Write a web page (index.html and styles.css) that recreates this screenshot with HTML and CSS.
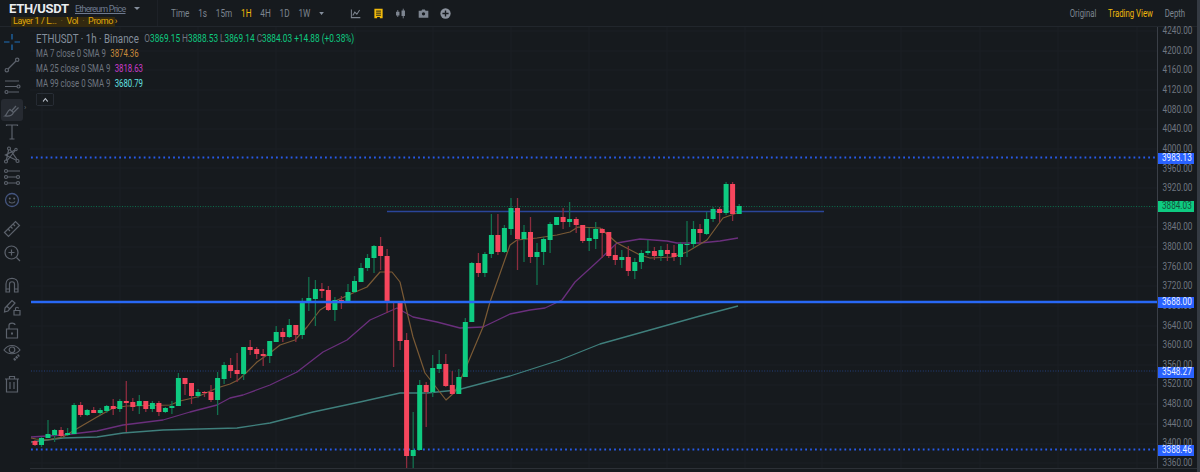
FILE: index.html
```html
<!DOCTYPE html>
<html lang="en">
<head>
<meta charset="utf-8">
<title>ETH/USDT</title>
<link rel="stylesheet" href="styles.css">
</head>
<body>
<header class="topbar">
  <div class="brand">
    <div class="brand-row">
      <span class="pair">ETH/USDT</span>
      <a class="pair-link">Ethereum Price</a>
      <span class="caret brand-caret"></span>
    </div>
    <div class="badges"><span>Layer 1 / L...</span><i>·</i><span>Vol</span><i>·</i><span>Promo ›</span></div>
  </div>
  <nav class="intervals">
    <span>Time</span><span>1s</span><span>15m</span><span class="gold">1H</span><span>4H</span><span>1D</span><span>1W</span><span class="caret"></span>
  </nav>
  <div class="top-icons">
    <svg viewBox="0 0 16 16" class="ticon"><path d="M2 2V14H15M4 11L7 6L10 9L14 3" fill="none" stroke="#7d8590" stroke-width="1.5"/></svg>
    <svg viewBox="0 0 16 16" class="ticon"><path d="M2 1H14V15H10V13H6V15H2Z" fill="#f0b90b"/><path d="M4.500 4.500H11.500M4.500 7.500H11.500M4.500 10.500H11.500" stroke="#161a1e" stroke-width="1.400"/></svg>
    <svg viewBox="0 0 16 16" class="ticon"><path d="M4 3V13M12 1V15" stroke="#7d8590" stroke-width="1.300"/><path d="M4 5.500V11M12 3.500V11.500" stroke="#7d8590" stroke-width="5"/></svg>
    <svg viewBox="0 0 16 16" class="ticon"><path d="M1 4H5L6 2H10L11 4H15V14H1Z" fill="#7d8590"/><circle cx="8" cy="8.500" r="2.400" fill="#161a1e"/></svg>
    <svg viewBox="0 0 16 16" class="ticon"><circle cx="8" cy="8" r="7.500" fill="#8a919c"/><path d="M8 3.500V12.500M3.500 8H12.500" stroke="#161a1e" stroke-width="2"/></svg>
  </div>
  <div class="views"><span>Original</span><span class="gold">Trading View</span><span>Depth</span></div>
</header>

<main class="main">
  <aside class="tools">
    <div class="tool"><svg viewBox="0 0 20 20"><path d="M10 2V7.500M10 12.500V18M2 10H7.500M12.500 10H18" stroke="#1e6fb8" stroke-width="1.200" fill="none"/></svg></div>
    <div class="tool"><svg viewBox="0 0 20 20"><path d="M6 14L14 6" class="s"/><circle cx="4.800" cy="15.200" r="1.700" class="s"/><circle cx="15.200" cy="4.800" r="1.700" class="s"/></svg></div>
    <div class="tool"><svg viewBox="0 0 20 20"><path d="M3 4H17M3 9.500H15M6.500 15H17" class="s"/><circle cx="16.500" cy="9.500" r="1.500" class="s"/><circle cx="4.500" cy="15" r="1.500" class="s"/></svg></div>
    <div class="tool active"><svg viewBox="0 0 20 20"><path d="M3 16C5 15 5 11 8 9.500L11.500 12.500C10.500 15 7 16.500 3 16ZM10 10.500L14 6M12 12L16.500 7.500" class="s"/></svg><b class="flyout">›</b></div>
    <div class="tool"><svg viewBox="0 0 20 20"><path d="M4.500 4V3H15.500V4M10 3V17M7.500 17H12.500" class="s"/></svg></div>
    <div class="tool"><svg viewBox="0 0 20 20"><path d="M4 17L7 3L16 16L3.500 10L14 4.500Z" class="s"/><circle cx="4" cy="16.500" r="1.500" class="d"/><circle cx="7" cy="3.500" r="1.500" class="d"/><circle cx="15.500" cy="16" r="1.500" class="d"/><circle cx="14" cy="4.500" r="1.200" class="d"/></svg></div>
    <div class="tool"><svg viewBox="0 0 20 20"><path d="M5.500 4H18M5.500 10H14M5.500 16H14" class="s"/><circle cx="4" cy="4" r="1.500" class="s"/><circle cx="4" cy="10" r="1.500" class="s"/><circle cx="4" cy="16" r="1.500" class="s"/><circle cx="16" cy="10" r="1.500" class="s"/><circle cx="16" cy="16" r="1.500" class="s"/></svg></div>
    <div class="tool"><svg viewBox="0 0 20 20"><circle cx="10" cy="10" r="6.500" fill="none" stroke="#44557f" stroke-width="1.300"/><path d="M7 11.500C8 13.500 12 13.500 13 11.500" class="s"/><circle cx="7.800" cy="8.500" r="1" fill="#5c626c"/><circle cx="12.200" cy="8.500" r="1" fill="#5c626c"/></svg></div>
    <div class="tool gap-l"><svg viewBox="0 0 20 20"><path d="M2.500 13.500L13.500 2.500L17.500 6.500L6.500 17.500ZM6 10L8 12M8.500 7.500L10.500 9.500M11 5L13 7" class="s"/></svg></div>
    <div class="tool gap-s"><svg viewBox="0 0 20 20"><circle cx="9.500" cy="9.500" r="6.500" class="s"/><path d="M14.500 14.500L18 18M9.500 6.500V12.500M6.500 9.500H12.500" class="s"/></svg></div>
    <div class="tool gap-m"><svg viewBox="0 0 20 20"><path d="M4 17V9C4 1.500 16 1.500 16 9V17H12.500V9C12.500 6 7.500 6 7.500 9V17ZM4 14H7.500M12.500 14H16" class="s"/></svg></div>
    <div class="tool"><svg viewBox="0 0 20 20"><path d="M3 11L10 3.500L13 6L6 14L2.500 15ZM4.500 9L8 12" class="s"/><path d="M12 13.500H18V18H12ZM13.500 13.500V11.500C13.500 9.800 16.500 9.800 16.500 11.500" class="s"/></svg></div>
    <div class="tool"><svg viewBox="0 0 20 20"><path d="M4.500 9H15.500V18H4.500ZM7 9V5.500C7 2.500 13 2.500 13 5" class="s"/><rect x="9" y="12.500" width="2" height="2" fill="#5c626c"/></svg></div>
    <div class="tool"><svg viewBox="0 0 20 20"><path d="M2 8C6 2 14 2 18 8C14 13 6 13 2 8Z" class="s"/><circle cx="10" cy="7.800" r="2.800" class="s"/><path d="M12 18L17 13" stroke="#5c626c" stroke-width="2.500" stroke-dasharray="2 .8"/></svg></div>
    <div class="tool gap-m"><svg viewBox="0 0 20 20"><path d="M3 5H17M7.500 5V2.500H12.500V5M4.500 5V18H15.500V5M8 8V15M12 8V15" class="s"/></svg></div>
  </aside>

  <section class="chart">
    <svg class="plot" viewBox="30 27 1127 445" width="1127" height="445">
      <path class="grid" d="M42 27V468M120 27V468M198 27V468M276 27V468M355 27V468M433 27V468M511 27V468M589 27V468M667 27V468M745 27V468M822 27V468M901 27V468M980 27V468M1058 27V468M1137 27V468M30 31H1157M30 51H1157M30 70H1157M30 90H1157M30 110H1157M30 129H1157M30 149H1157M30 168H1157M30 188H1157M30 208H1157M30 227H1157M30 247H1157M30 267H1157M30 286H1157M30 306H1157M30 326H1157M30 345H1157M30 365H1157M30 385H1157M30 404H1157M30 424H1157M30 444H1157M30 463H1157"/>

      <path class="hl-dot" d="M31 157.500H1157M31 449.500H1157"/>
      <path class="hl-thin" d="M31 371H1157"/>
      <path class="hl-last" d="M31 206.500H1157"/>
      <path class="hl-trend" d="M387 211.500H824"/>

      <path class="ma99" d="M31 442L63 438L97 437L123 433L163 430L237 428L270 423L313 412L360 402L400 393L427 393L457 390L510 376L560 360L600 344L650 330L700 316L738 306"/>
      <path class="ma25" d="M31 437L63 435L97 431L123 425L163 420L190 412L217 405L230 398L243 395L270 385L297 372L323 352L347 340L370 320L397 308L413 317L437 322L460 328L483 327L510 314L530 310L545 308L562 300L575 282L597 262L617 243L640 239L667 241L677 243L700 243L720 241L738 238"/>
      <path class="ma7" d="M31 438L36 439L47 440L63 437L73 431L97 417L113 408L127 406L170 405L180 401L197 397L217 388L230 384L238 380L247 372L257 362L270 353L280 345L295 340L307 327L320 310L333 302L353 293L367 287L380 272L392 272L400 282L407 312L413 337L425 373L446 400L455 392L467 365L483 327L490 302L510 245L517 240L537 238L557 235L570 232L578 227L600 228L617 243L640 255L650 258L673 257L687 252L707 240L723 218L737 213"/>

      <path class="wick-up" d="M41.500 437V447M48 420V438M54.600 429V442M67.600 428V436M74.100 403V434M87.200 409V416M100.200 408V415M106.700 405V413M119.800 399V412M139.300 395V414M152.400 401V412M165.400 407V413M171.900 401V414M178.400 373V406M198 389V398M217.600 372V415M224.100 362V384M243.600 347V380M269.700 341V363M276.200 326V342M289.300 319V338M302.300 298V339M308.800 277V311M315.400 280V326M334.900 297V321M348 284V303M354.500 276V293M361 263V282M367.500 254V271M374 245V273M413.200 412V468M419.700 380V450M432.700 355V397M439.200 350V373M458.800 369V394M465.300 318V377M471.800 262V322M484.900 252V277M491.400 214V258M504.400 225V253M511 198V235M524 225V262M537 243V285M543.600 237V265M550.100 222V253M556.600 217V225M569.600 202V227M589.200 228V251M595.700 222V249M621.800 250V268M634.800 258V279M641.400 250V269M647.900 240V255M660.900 246V261M680.500 242V265M687 221V257M693.500 221V248M706.600 212V235M713.100 207V222M726.100 182V215M739.200 204V214"/>
      <path class="wick-down" d="M35 440V446M61.100 427V437M80.600 402V417M93.700 407V413M113.200 399V415M126.300 381V432M132.800 398V411M145.800 401V412M158.900 401V416M185 378V395M191.500 383V404M204.500 391V397M211 385V402M230.600 358V378M237.100 353V382M250.200 340V355M256.700 347V359M263.200 349V366M282.800 328V342M295.800 325V342M321.900 283V298M328.400 286V311M341.400 296V309M380.600 237V270M387.100 249V313M393.600 302V367M400.100 303V350M406.600 333V468M426.200 382V427M445.800 354V387M452.300 371V395M478.400 253V277M497.900 214V255M517.500 198V270M530.500 217V263M563.100 208V229M576.200 217V233M582.700 225V243M602.200 228V258M608.800 232V258M615.300 245V265M628.300 246V276M654.400 247V260M667.400 244V261M674 245V261M700 224V242M719.600 207V222M732.600 182V221"/>

      <path class="body-up" d="M41.500 438V445M48 434V438M54.600 430V435M67.600 433V435M74.100 405V434M87.200 410V415M100.200 410V413M106.700 406V411M119.800 401V409M139.300 401V406M152.400 403V409M165.400 408V412M171.900 406V408M178.400 378V406M198 392V396M217.600 378V400M224.100 365V379M243.600 347V374M269.700 341V356M276.200 332V342M289.300 325V337M302.300 302V335M308.800 298V302M315.400 289V299M334.900 300V310M348 292V303M354.500 281V292M361 268V282M367.500 258V268M374 246V258M413.200 450V456M419.700 385V450M432.700 368V392M439.200 364V369M458.800 377V394M465.300 322V377M471.800 263V322M484.900 254V273M491.400 235V254M504.400 228V252M511 208V229M524 232V239M537 252V257M543.600 239V252M550.100 224V240M556.600 217V225M569.600 219V222M589.200 238V241M595.700 229V239M621.800 257V260M634.800 262V271M641.400 253V262M647.900 251V253M660.900 250V256M680.500 244V257M687 244V245M693.500 229V244M706.600 219V234M713.100 209V219M726.100 184V213M739.200 206V214"/>
      <path class="body-down" d="M35 441V445M61.100 430V436M80.600 405V415M93.700 410V413M113.200 406V409M126.300 401V403M132.800 402V407M145.800 401V409M158.900 403V412M185 378V384M191.500 383V396M204.500 392V393M211 392V400M230.600 365V371M237.100 370V374M250.200 347V350M256.700 349V354M263.200 354V356M282.800 332V337M295.800 325V335M321.900 289V291M328.400 290V310M341.400 300V303M380.600 246V256M387.100 256V303M393.600 302V303M400.100 303V341M406.600 340V456M426.200 385V392M445.800 364V386M452.300 385V394M478.400 263V273M497.900 235V252M517.500 208V239M530.500 232V257M563.100 217V222M576.200 219V225M582.700 225V241M602.200 229V233M608.800 232V256M615.300 255V260M628.300 257V271M654.400 251V256M667.400 250V254M674 253V257M700 229V233M719.600 209V213M732.600 184V214"/>

      <path class="hl-solid" d="M31 302H1157"/>
      <path class="floor" d="M30 468.500H1157"/>
    </svg>

    <div class="legend">
      <div class="legend-title">
        <span class="symbol">ETHUSDT · 1h · Binance</span>
        <span class="ohlc">O<b>3869.15</b> H<b>3888.53</b> L<b>3869.14</b> C<b>3884.03</b> <b>+14.88 (+0.38%)</b></span>
      </div>
      <div class="legend-row">MA 7 close 0 SMA 9 <span class="v7">3874.36</span></div>
      <div class="legend-row">MA 25 close 0 SMA 9 <span class="v25">3818.63</span></div>
      <div class="legend-row">MA 99 close 0 SMA 9 <span class="v99">3680.79</span></div>
      <button class="collapse"><svg viewBox="0 0 10 6"><path d="M2 4.500L5 1.500L8 4.500" fill="none" stroke="#b7bdc6" stroke-width="1.200"/></svg></button>
    </div>
  </section>

  <aside class="axis">
    <div class="ticks">
      <span>4240.00</span><span>4200.00</span><span>4160.00</span><span>4120.00</span><span>4080.00</span><span>4040.00</span><span>4000.00</span><span>3960.00</span><span>3920.00</span><span>3880.00</span><span>3840.00</span><span>3800.00</span><span>3760.00</span><span>3720.00</span><span>3680.00</span><span>3640.00</span><span>3600.00</span><span>3560.00</span><span>3520.00</span><span>3480.00</span><span>3440.00</span><span>3400.00</span><span>3360.00</span>
    </div>
    <div class="tag tag-a"><span>3983.13</span></div>
    <div class="tag tag-last"><span>3884.03</span></div>
    <div class="tag tag-b"><span>3688.00</span></div>
    <div class="tag tag-c"><span>3548.27</span></div>
    <div class="tag tag-d"><span>3388.46</span></div>
  </aside>
  <div class="strip"></div>
</main>
</body>
</html>
```
FILE: styles.css
```css
* { box-sizing: border-box; }
html, body { margin: 0; height: 100%; }
body {
  width: 1200px;
  height: 472px;
  overflow: hidden;
  background: #161a1e;
  color: #848e9c;
  font-family: Roboto, "Liberation Sans", sans-serif;
  font-size: 10px;
}
.s { fill: none; stroke: #5c626c; stroke-width: 1.2; }
.d { fill: #161a1e; stroke: #5c626c; stroke-width: 1.1; }
.gold { color: #f0b90b; }

/* top bar */
.topbar {
  height: 27px;
  display: flex;
  align-items: center;
  border-bottom: 1px solid #21262c;
}
.brand {
  width: 158px;
  height: 26px;
  padding: 1px 0 0 9px;
  border-right: 1px solid #1d2127;
  flex: none;
}
.brand-row { display: flex; align-items: center; height: 15px; }
.pair { font-size: 13px; font-weight: 700; color: #eaecef; width: 66px; letter-spacing: -.3px; }
.pair-link {
  font-size: 9px;
  color: #6f7a8f;
  text-decoration: underline;
  letter-spacing: -.75px;
  width: 56px;
}
.caret {
  width: 0; height: 0;
  border-left: 3px solid transparent;
  border-right: 3px solid transparent;
  border-top: 3px solid #848e9c;
  display: inline-block;
}
.brand-caret { margin-left: 3px; }
.badges {
  margin: 1px 0 0 2px;
  width: 104px;
  height: 9.500px;
  background: #33290f;
  color: #e0a90a;
  font-size: 9px;
  letter-spacing: -.4px;
  line-height: 9.500px;
  display: flex;
  padding-left: 2px;
  white-space: nowrap;
}
.badges i { font-style: normal; margin: 0 4px; color: #7d6a20; }
.intervals {
  margin-left: 13px;
  width: 158px;
  flex: none;
  display: flex;
  align-items: center;
  gap: 11.300px;
  font-size: 10.500px;
  transform: scaleX(.78);
  transform-origin: left center;
  color: #7d8590;
  white-space: nowrap;
}
.top-icons {
  margin-left: 21px;
  display: flex;
  gap: 11.600px;
  flex: none;
}
.ticon { width: 11px; height: 11px; display: block; }
.views {
  margin-left: auto;
  padding-right: 19px;
  display: flex;
  gap: 15px;
  font-size: 10px;
  color: #7d8590;
  transform: scaleX(.78);
  transform-origin: right center;
  white-space: nowrap;
}

/* main */
.main { display: flex; height: 445px; position: relative; }
.tools {
  width: 30px;
  flex: none;
  padding: 4px 0 0 0;
}
.tool {
  width: 24px;
  height: 22.500px;
  display: flex;
  align-items: center;
  justify-content: center;
  position: relative;
}
.tool svg { width: 20px; height: 20px; }
.tool.active { background: #262a31; border-radius: 3px; margin-left: 1px; width: 22px; }
.flyout {
  position: absolute;
  left: 23px;
  top: 4px;
  font-size: 8px;
  font-weight: 400;
  color: #5c626c;
}
.gap-l { margin-top: 7px; }
.gap-s { margin-top: 1px; }
.gap-m { margin-top: 9.500px; }

/* chart */
.chart { width: 1127px; flex: none; position: relative; overflow: hidden; }
.plot { display: block; }
.plot path { fill: none; stroke-linejoin: round; }
.grid { stroke: #1b1f25; stroke-width: 1; }
.hl-dot { stroke: #2962ff; stroke-width: 1.800; stroke-dasharray: 1.800 3.100; opacity: .9; }
.hl-thin { stroke: #24407f; stroke-width: 1; stroke-dasharray: 1 1.600; }
.hl-last { stroke: #0c6e4c; stroke-width: 1; stroke-dasharray: 1 1.600; }
.hl-trend { stroke: #2a4599; stroke-width: 1.300; }
.hl-solid { stroke: #2868f5; stroke-width: 2.400; }
.floor { stroke: #2c3036; stroke-width: 1; }
.ma7 { stroke: #7a5a35; stroke-width: 1.200; }
.ma25 { stroke: #6a2f7c; stroke-width: 1.300; }
.ma99 { stroke: #3f7f7c; stroke-width: 1.300; }
.wick-up { stroke: #12704e; stroke-width: 1.300; }
.wick-down { stroke: #8c2c3e; stroke-width: 1.300; }
.body-up { stroke: #0ecb81; stroke-width: 5; }
.body-down { stroke: #f6465d; stroke-width: 5; }

.legend {
  position: absolute;
  left: 6px;
  top: 4px;
  width: 560px;
  transform: scaleX(.78);
  transform-origin: left top;
  color: #6f7680;
  white-space: nowrap;
}
.legend-title { height: 15px; display: flex; align-items: center; gap: 7px; }
.symbol { font-size: 12.500px; color: #848e9c; }
.ohlc { font-size: 10.600px; }
.ohlc b { font-weight: 400; color: #0ecb81; }
.legend-row { height: 15px; line-height: 15px; font-size: 10px; }
.v7 { color: #c98a3a; margin-left: 3px; }
.v25 { color: #c93ac9; margin-left: 3px; }
.v99 { color: #62e0e0; margin-left: 3px; }
.collapse {
  display: flex;
  align-items: center;
  justify-content: center;
  margin-top: 2px;
  width: 23px;
  height: 13px;
  padding: 0;
  background: transparent;
  border: 1px solid #2b3139;
  border-radius: 2px;
}
.collapse svg { width: 10px; height: 6px; }

/* price axis */
.axis {
  width: 40px;
  flex: none;
  border-left: 1px solid #3a3f47;
  border-bottom: 1px solid #2c3036;
  position: relative;
  height: 442px;
  font-size: 10.500px;
}
.ticks { margin-top: -5.800px; }
.ticks span {
  display: block;
  height: 19.636px;
  line-height: 19.636px;
  text-align: center;
  color: #6f7680;
  transform: scaleX(.78);
}
.tag {
  position: absolute;
  left: 0;
  width: 36px;
  height: 10.500px;
  line-height: 10.500px;
  text-align: center;
  background: #2962ff;
  color: #eaf0ff;
}
.tag span { display: block; transform: scaleX(.78); }
.tag-a { top: 126px; }
.tag-last { top: 174px; background: #0ecb81; color: #14523a; }
.tag-b { top: 270px; }
.tag-c { top: 340px; }
.tag-d { top: 418px; }
.strip { width: 3px; flex: none; background: #343a42; margin-top: -27px; height: 472px; }
```
